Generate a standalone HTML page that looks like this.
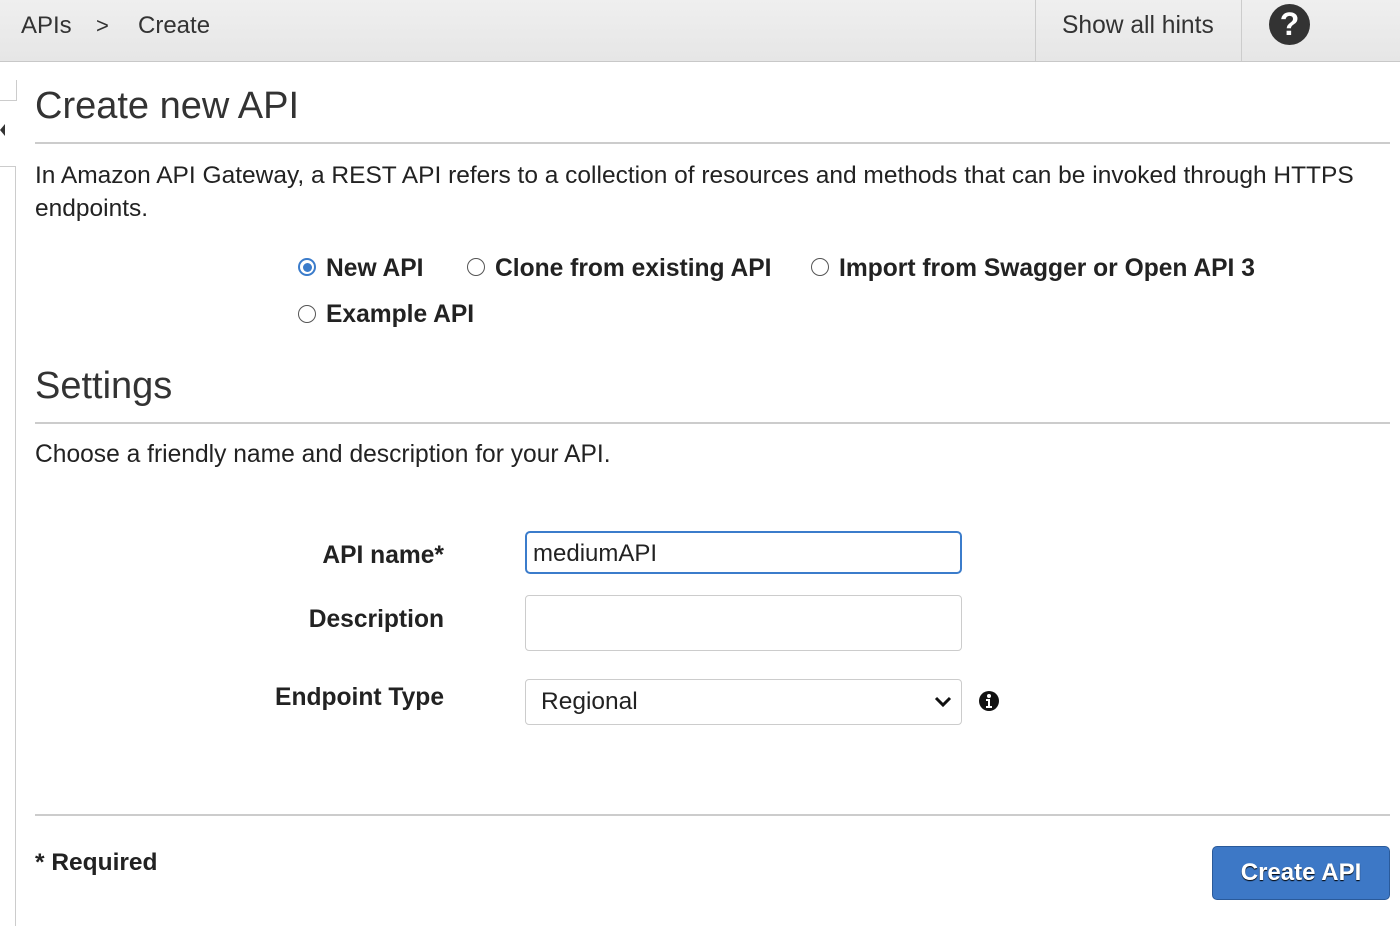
<!DOCTYPE html>
<html><head><style>
body{margin:0;width:1400px;height:922px;overflow:hidden;background:#fff;font-family:"Liberation Sans",sans-serif;color:#222;position:relative}
.a{position:absolute;white-space:nowrap}
.hdr{position:absolute;left:0;top:0;width:1400px;height:61px;background:linear-gradient(#efefef,#e6e6e6);border-bottom:1px solid #c8c8c8}
.rad{position:absolute;width:18px;height:18px;border:1.5px solid #555;border-radius:50%;box-sizing:border-box;background:#fff}
.lbl{font-weight:bold;font-size:24.6px;text-align:right}
.inp{position:absolute;left:525px;width:437px;box-sizing:border-box;border:1px solid #ccc;border-radius:4px;background:#fff}
</style></head><body>
<div class="hdr"></div>
<div class="a" style="left:21px;top:12px;font-size:24px;color:#333">APIs</div>
<div class="a" style="left:96px;top:13px;font-size:22px;color:#333">&gt;</div>
<div class="a" style="left:138px;top:12px;font-size:24px;color:#333">Create</div>
<div class="a" style="left:1035px;top:0;width:1px;height:61px;background:#ccc"></div>
<div class="a" style="left:1241px;top:0;width:1px;height:61px;background:#ccc"></div>
<div class="a" style="left:1062px;top:12px;font-size:24.6px;color:#333">Show all hints</div>
<div class="a" style="left:1269px;top:4px;width:41px;height:41px;border-radius:50%;background:#333;color:#fff;font-weight:bold;font-size:32px;text-align:center;line-height:41px">?</div>
<div class="a" style="left:0;top:80px;width:16px;height:20px;border-right:1px solid #ccc;border-bottom:1px solid #ccc"></div>
<div class="a" style="left:0;top:124px;width:0;height:0;border-top:6px solid transparent;border-bottom:6px solid transparent;border-right:5px solid #333"></div>
<div class="a" style="left:0;top:166px;width:16px;height:760px;border-right:1px solid #ccc;border-top:1px solid #ccc;box-sizing:border-box"></div>

<div class="a" style="left:35px;top:85px;font-size:38px;color:#333">Create new API</div>
<div class="a" style="left:35px;top:142px;width:1355px;height:2px;background:#ccc"></div>
<div class="a" style="left:35px;top:159px;font-size:24.5px;line-height:33px">In Amazon API Gateway, a REST API refers to a collection of resources and methods that can be invoked through HTTPS<br>endpoints.</div>

<div class="rad" style="left:298px;top:258px;border:2px solid #3b7ccb"><div style="position:absolute;left:2.5px;top:2.5px;width:9px;height:9px;border-radius:50%;background:#3b7ccb"></div></div>
<div class="a lbl" style="left:326px;top:255px">New API</div>
<div class="rad" style="left:467px;top:258px"></div>
<div class="a lbl" style="left:495px;top:255px">Clone from existing API</div>
<div class="rad" style="left:811px;top:258px"></div>
<div class="a lbl" style="left:839px;top:255px">Import from Swagger or Open API 3</div>
<div class="rad" style="left:298px;top:305px"></div>
<div class="a lbl" style="left:326px;top:301px">Example API</div>

<div class="a" style="left:35px;top:365px;font-size:38px;color:#333">Settings</div>
<div class="a" style="left:35px;top:422px;width:1355px;height:2px;background:#ccc"></div>
<div class="a" style="left:35px;top:441px;font-size:24.6px">Choose a friendly name and description for your API.</div>

<div class="a lbl" style="right:956px;top:542px">API name*</div>
<div class="a lbl" style="right:956px;top:606px">Description</div>
<div class="a lbl" style="right:956px;top:684px">Endpoint Type</div>

<div class="inp" style="top:531px;height:43px;border:2px solid #3b7ccb;border-radius:5px"><span class="a" style="left:6px;top:7px;font-size:24px">mediumAPI</span></div>
<div class="inp" style="top:595px;height:56px"></div>
<div class="inp" style="top:679px;height:46px"><span class="a" style="left:15px;top:8px;font-size:24.5px">Regional</span>
<svg class="a" style="left:408px;top:15px" width="18" height="14" viewBox="0 0 18 14"><path d="M2 3l7 7 7-7" fill="none" stroke="#111" stroke-width="3"/></svg></div>
<svg class="a" style="left:978px;top:690px" width="22" height="22" viewBox="0 0 22 22"><circle cx="11" cy="11" r="10" fill="#111"/><circle cx="11" cy="6" r="2" fill="#fff"/><path d="M8 9h4v7h2v2H8v-2h2v-5H8z" fill="#fff"/></svg>

<div class="a" style="left:35px;top:814px;width:1355px;height:2px;background:#ccc"></div>
<div class="a" style="left:35px;top:849px;font-size:24.5px;font-weight:bold">* Required</div>
<div class="a" style="left:1212px;top:846px;width:178px;height:54px;box-sizing:border-box;background:#3d78c6;border:1px solid #2a5a9a;border-radius:5px;color:#fff;font-weight:bold;font-size:24px;text-align:center;line-height:52px;text-shadow:0 1px 1px #000">Create API</div>
</body></html>
